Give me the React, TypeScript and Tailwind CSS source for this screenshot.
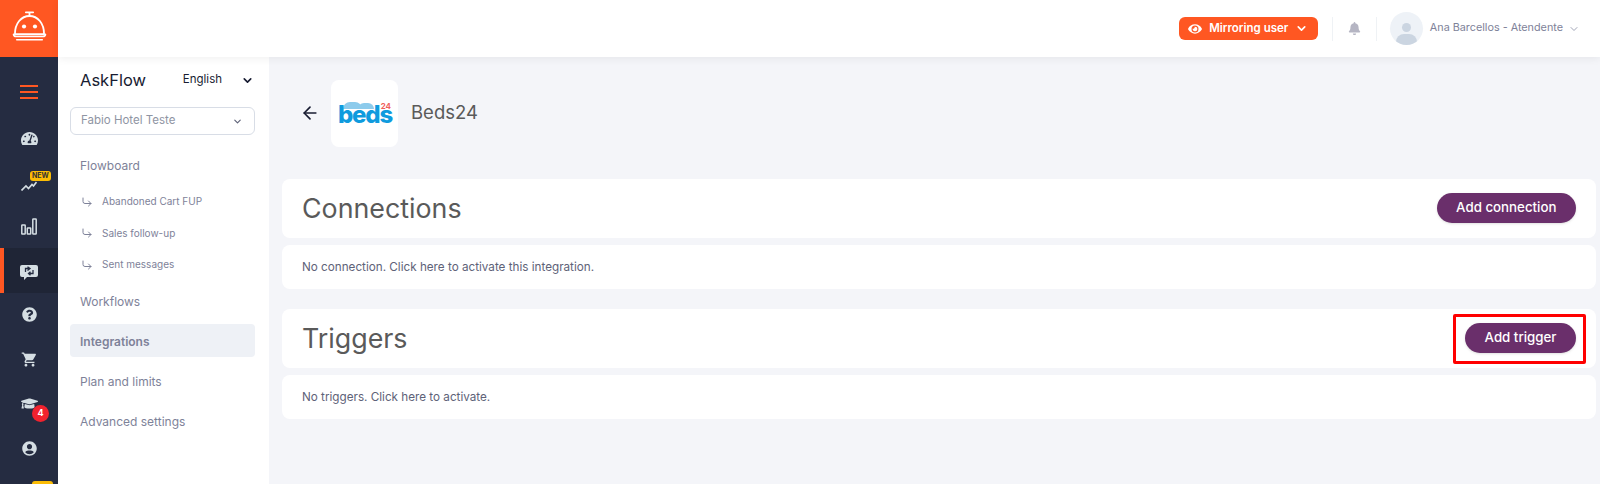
import { ChevronDown, CornerDownRight, ArrowLeft } from 'lucide-react'
import { FaBell, FaEye, FaGraduationCap, FaQuestionCircle, FaTachometerAlt, FaUserCircle } from 'react-icons/fa'
import { MdShoppingCart } from 'react-icons/md'

function BellLogo() {
  return (
    <svg width="35" height="31" viewBox="0 0 38 34" fill="none" className="mb-[5px]">
      <path d="M15 1.500h8M19 1.500v4" stroke="white" strokeWidth="2" strokeLinecap="round" />
      <path d="M3 25.500C3 13.500 10 5.500 19 5.500s16 8 16 20Z" stroke="white" strokeWidth="2" strokeLinejoin="round" />
      <circle cx="13" cy="17" r="2.300" fill="white" />
      <circle cx="25" cy="17" r="2.300" fill="white" />
      <path d="M1.500 25.500c0 2 1.500 2.500 3 2.500h29c1.500 0 3-.5 3-2.500" stroke="white" strokeWidth="1.800" strokeLinecap="round" />
      <path d="M5 31.500h28" stroke="white" strokeWidth="1.800" strokeLinecap="round" />
    </svg>
  )
}

function BarsIcon() {
  return (
    <svg width="16" height="17" viewBox="0 0 16 17" fill="none" stroke="#d5dee3" strokeWidth="1.500" className="mt-[2px]">
      <rect x="0.800" y="7" width="3.400" height="9" rx="0.500" />
      <rect x="6.300" y="10" width="3.400" height="6" rx="0.500" />
      <rect x="11.800" y="1" width="3.400" height="15" rx="0.500" />
    </svg>
  )
}

function ChatSwapIcon() {
  return (
    <svg width="18" height="15" viewBox="0 0 18 15" className="mt-[4px]">
      <path d="M2 0h14a2 2 0 0 1 2 2v8a2 2 0 0 1-2 2H7l-3 3v-3H2a2 2 0 0 1-2-2V2a2 2 0 0 1 2-2Z" fill="#d5dee3" />
      <path d="M5.500 7V3.500H10M7.500 5.500 10 3.500 7.500 1.800M13 5v3.500H8.500M10.500 6.700 8.500 8.500l2 1.800" stroke="#252c41" strokeWidth="1.300" fill="none" />
    </svg>
  )
}

function TrendIcon() {
  return (
    <svg width="16" height="10" viewBox="0 0 16 10" fill="none" stroke="#d5dee3" strokeWidth="1.600" className="mt-[10px]">
      <path d="M0.500 9.500 5 5l2.500 2.500L11 3.500l1.500 1.500L15.500 1" />
    </svg>
  )
}

function BedsLogo() {
  return (
    <div className="flex h-[67px] w-[67px] items-center justify-center rounded-lg bg-white">
      <div className="relative h-[25px] w-[53px]">
        <div className="absolute left-[5px] top-[1px] h-[7px] w-[19px] rounded-t-full bg-[#8ccbec]" />
        <div className="absolute left-[20px] top-[2px] h-[6px] w-[16px] rounded-t-full bg-[#8ccbec]" />
        <span className="absolute right-0 top-[2px] text-[8px] font-bold leading-[6px] text-[#f0605a]">24</span>
        <span className="absolute left-0 top-[8px] text-[24px] font-extrabold leading-[12px] tracking-[-1.200px] text-[#0f9bde]">beds</span>
      </div>
    </div>
  )
}

function RailItem({ active, children }: { active?: boolean; children: React.ReactNode }) {
  return (
    <div className={`relative flex h-[44.500px] items-center justify-center ${active ? 'border-l-4 border-[#ff5722] bg-[#1f2536] pr-1' : ''}`}>
      {children}
    </div>
  )
}

function SubItem({ label }: { label: string }) {
  return (
    <div className="flex h-[31.500px] items-center pl-[11px] text-[10px] text-[#7e8299]">
      <CornerDownRight size={12} strokeWidth={2} className="mr-[9px]" />
      {label}
    </div>
  )
}

function NavItem({ label, active }: { label: string; active?: boolean }) {
  return (
    <div className={`flex h-[33px] items-center rounded px-[10px] pt-[4px] text-[12px] text-[#7e8299] ${active ? 'bg-[#eef1f6] font-semibold text-[#5e6278]' : ''}`}>
      {label}
    </div>
  )
}

function SectionCard({ title, button, text }: { title: string; button: string; text: string }) {
  return (
    <div className="flex flex-col gap-[7px]">
      <div className="flex h-[58.500px] items-center justify-between rounded-lg bg-white pl-[20px] pr-[20px]">
        <h2 className="text-[26.800px] font-normal text-[#5a5a5a]">{title}</h2>
        <button className="flex h-[30px] items-center rounded-full bg-[#6a2f6b] px-[19.500px] text-[13.300px] font-medium text-white shadow-sm">
          {button}
        </button>
      </div>
      <div className="flex h-[44.500px] items-center rounded-lg bg-white px-[20px] pt-[2px] text-[11.700px] text-[#5e6278]">{text}</div>
    </div>
  )
}

export default function App() {
  return (
    <div className="relative flex h-[484px] w-[1600px] overflow-hidden bg-[#f4f5f9] font-['Inter',sans-serif]">
      {/* left rail */}
      <div className="flex w-[58px] shrink-0 flex-col bg-[#252c41]">
        <div className="flex h-[57px] shrink-0 items-center justify-center bg-[#ff5722]">
          <BellLogo />
        </div>
        <div className="pt-[13px]">
          <RailItem>
            <div className="flex w-[18px] flex-col gap-[4px]">
              <div className="h-[2px] bg-[#ff5722]" />
              <div className="h-[2px] bg-[#ff5722]" />
              <div className="h-[2px] bg-[#ff5722]" />
            </div>
          </RailItem>
          <RailItem><FaTachometerAlt size={17} color="#d5dee3" className="mt-[4px]" /></RailItem>
          <RailItem>
            <TrendIcon />
            <span className="absolute left-[30px] top-[12px] rounded-[3px] bg-[#fbbc05] px-[2px] text-[7px] font-bold leading-[10px] text-[#333]">NEW</span>
          </RailItem>
          <RailItem><BarsIcon /></RailItem>
          <RailItem active><ChatSwapIcon /></RailItem>
          <RailItem><FaQuestionCircle size={15} color="#d5dee3" /></RailItem>
          <RailItem><MdShoppingCart size={17} color="#d5dee3" /></RailItem>
          <RailItem>
            <FaGraduationCap size={17} color="#d5dee3" />
            <span className="absolute left-[32px] top-[23px] flex h-[17px] w-[17px] items-center justify-center rounded-full bg-[#f1222e] text-[9px] font-bold text-white">4</span>
          </RailItem>
          <RailItem><FaUserCircle size={15} color="#d5dee3" /></RailItem>
          <div className="ml-[32px] mt-[10px] h-[8px] w-[21px] rounded-t-[3px] bg-[#fbbc05]" />
        </div>
      </div>

      <div className="flex min-w-0 flex-1 flex-col">
        {/* top bar */}
        <header className="z-10 flex h-[57px] shrink-0 items-center justify-end bg-white pr-[20px] shadow-[0_2px_8px_rgba(0,0,0,0.06)]">
          <button className="flex h-[23px] w-[139px] items-center justify-center gap-[7px] rounded-md bg-[#ff5722] text-[11.500px] font-semibold text-white">
            <FaEye size={14} />
            Mirroring user
            <ChevronDown size={13} strokeWidth={3} />
          </button>
          <div className="ml-[14px] h-[24px] w-px bg-[#eff2f5]" />
          <FaBell size={13} color="#b5b5c3" className="ml-[15px]" />
          <div className="ml-[15px] h-[24px] w-px bg-[#eff2f5]" />
          <div className="relative ml-[13px] h-[33px] w-[33px] overflow-hidden rounded-full bg-[#eef2f7]">
            <div className="absolute left-[12px] top-[11px] h-[9px] w-[9px] rounded-full bg-[#cbd5e1]" />
            <div className="absolute left-[6px] top-[22px] h-[16px] w-[21px] rounded-full bg-[#cbd5e1]" />
          </div>
          <span className="ml-[7px] text-[10.800px] text-[#7e8299]">Ana Barcellos - Atendente</span>
          <ChevronDown size={12} color="#a1a5b7" className="ml-[5px]" />
        </header>

        <div className="flex min-h-0 flex-1">
          {/* sidebar */}
          <aside className="w-[211px] shrink-0 bg-white pl-[12px] pr-[14px] pt-[10px]">
            <div className="flex h-[26px] items-center justify-between pl-[10px] pr-[1px]">
              <span className="text-[16.500px] text-[#181c32]">AskFlow</span>
              <div className="flex items-center gap-[19px]">
                <span className="text-[11.500px] text-[#181c32]">English</span>
                <ChevronDown size={13} strokeWidth={3} color="#181c32" />
              </div>
            </div>
            <div className="mt-[14px] flex h-[28px] items-center justify-between rounded-md border border-[#d8dde6] pl-[10px] pr-[11px] text-[11.500px] text-[#8f95a3]">
              Fabio Hotel Teste
              <ChevronDown size={11} strokeWidth={2.500} color="#5e6278" />
            </div>
            <div className="mt-[14px] flex h-[33px] items-center px-[10px] text-[12px] text-[#7e8299]">Flowboard</div>
            <div className="mt-[4px]">
              <SubItem label="Abandoned Cart FUP" />
              <SubItem label="Sales follow-up" />
              <SubItem label="Sent messages" />
            </div>
            <div className="mt-[3px] flex flex-col gap-[7px]">
              <NavItem label="Workflows" />
              <NavItem label="Integrations" active />
              <NavItem label="Plan and limits" />
              <NavItem label="Advanced settings" />
            </div>
          </aside>

          {/* content */}
          <main className="min-w-0 flex-1 pl-[13px] pr-[4px] pt-[9px]">
            <div className="flex h-[94px] items-center rounded-lg pl-[18px]">
              <ArrowLeft size={20} color="#181c32" />
              <div className="ml-[11px]"><BedsLogo /></div>
              <span className="ml-[13px] text-[18.500px] text-[#5a5a5a]">Beds24</span>
            </div>
            <div className="mt-[19px]">
              <SectionCard title="Connections" button="Add connection" text="No connection. Click here to activate this integration." />
            </div>
            <div className="mt-[20px]">
              <SectionCard title="Triggers" button="Add trigger" text="No triggers. Click here to activate." />
            </div>
          </main>
        </div>
      </div>

      {/* annotation over the button */}
      <div className="absolute left-[1453px] top-[314px] h-[50px] w-[133px] rounded-[2px] border-[3px] border-[#ff0000]" />
    </div>
  )
}
